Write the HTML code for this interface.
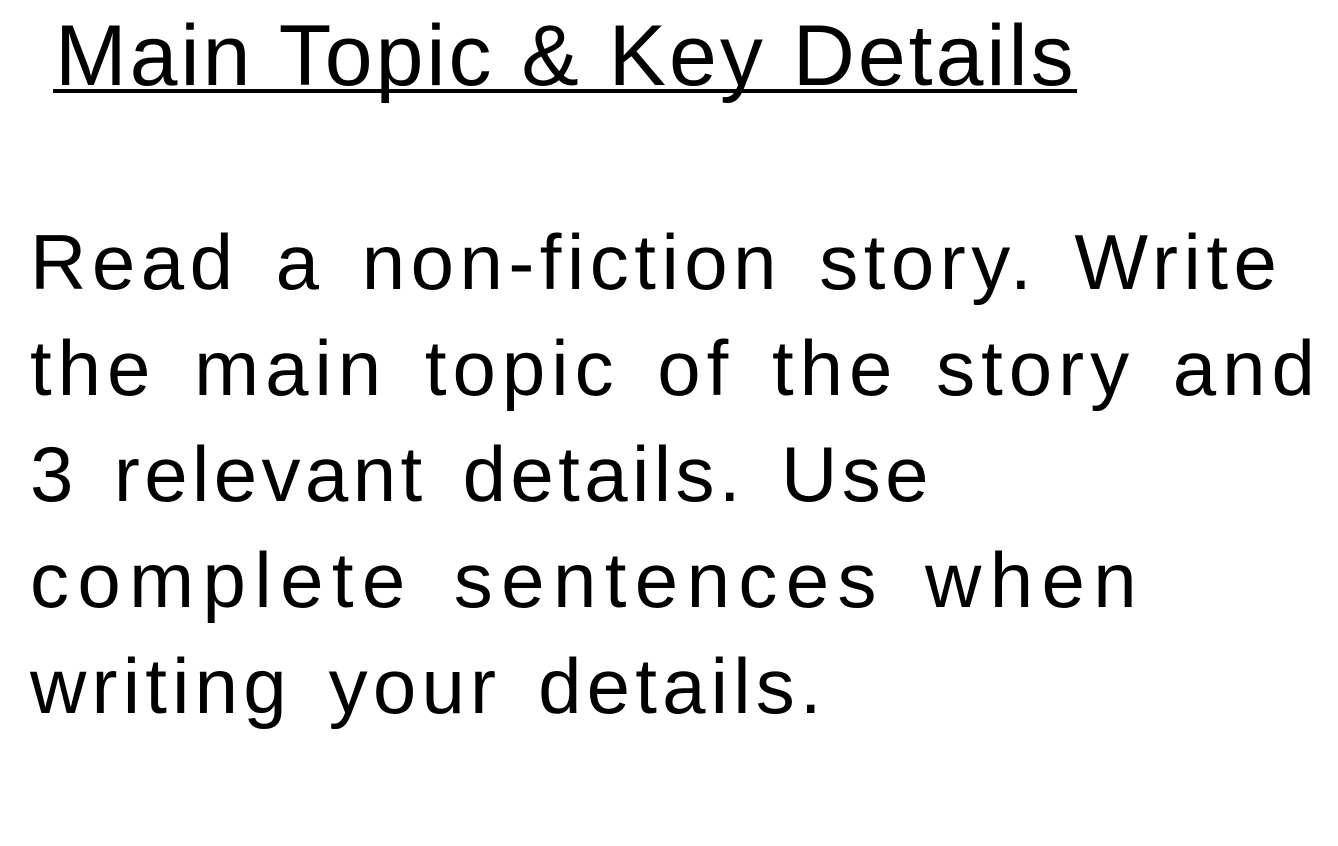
<!DOCTYPE html>
<html><head><meta charset="utf-8"><style>
html,body{margin:0;padding:0;background:#fff;width:1338px;height:846px;overflow:hidden}
body{font-family:"Liberation Sans","DejaVu Sans",sans-serif;color:#000;position:relative}
.t{position:absolute;left:55px;top:6px;font-size:86px;letter-spacing:3px;white-space:nowrap;line-height:100px}
.u{position:absolute;left:53px;top:89px;width:1024px;height:4px;background:#000}
.l{position:absolute;left:30px;font-size:78px;white-space:nowrap;letter-spacing:6px;word-spacing:10px;line-height:80px}
</style></head><body>
<div class="t">Main Topic &amp; Key Details</div>
<div class="u"></div>
<div class="l" style="top:222px;letter-spacing:5.5px">Read a non-fiction story. Write</div>
<div class="l" style="top:328px">the main topic of the story and</div>
<div class="l" style="top:434px;letter-spacing:4.4px">3 relevant details. Use</div>
<div class="l" style="top:540px;letter-spacing:8.4px">complete sentences when</div>
<div class="l" style="top:646px;letter-spacing:5.2px">writing your details.</div>
</body></html>
